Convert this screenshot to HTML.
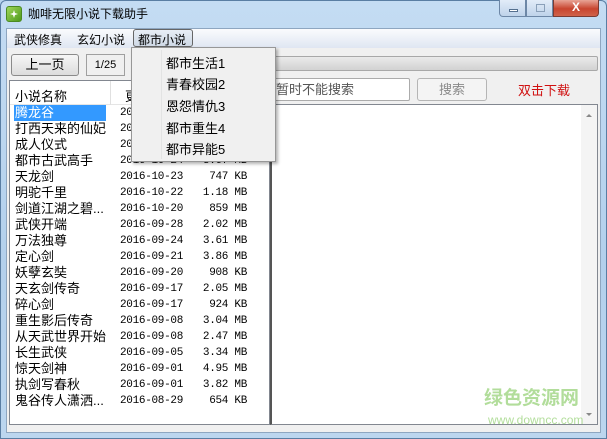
<!DOCTYPE html>
<html><head><meta charset="utf-8"><style>
*{margin:0;padding:0;box-sizing:border-box}
body{width:607px;height:439px;overflow:hidden;background:#b9d4ee;font-family:"Liberation Sans","Noto Sans CJK SC",sans-serif;font-size:12px;color:#000;position:relative}
.a{position:absolute}
.frame{left:0;top:0;width:607px;height:439px;background:linear-gradient(#c4dcf3,#b3d0ec 60%,#bcd6ef);border:1px solid #5a7ea3;border-radius:6px 6px 0 0}
.client{left:6px;top:28px;width:595px;height:405px;background:#f0f0f0;border:1px solid #8ea6c0}
.menubar{left:7px;top:29px;width:593px;height:19px;background:linear-gradient(#fafbfd,#dfe6f2)}
.btn{border:1px solid #8a8a8a;border-radius:3px;background:linear-gradient(#f6f6f6,#dcdcdc);text-align:center}
.row{position:absolute;left:0;height:16px;line-height:16px;width:259px;white-space:nowrap}
.row span{position:absolute}
.n{left:5px}
.d{left:110px;font-family:"Liberation Mono","WenQuanYi Zen Hei",monospace;font-size:11px;letter-spacing:-0.3px}
.s{right:22px;font-family:"Liberation Mono",monospace;font-size:11px;letter-spacing:-0.3px}
.mi{position:absolute;left:34px;height:20px;font-size:13px;color:#000;white-space:nowrap}
</style></head><body>
<div class="a frame"></div>
<div class="a" style="left:6px;top:6px;width:16px;height:16px;background:linear-gradient(135deg,#9fd65a,#4e9a1c);border-radius:3px;border:1px solid #4b8a22"><div style="position:absolute;left:3px;top:3px;width:8px;height:8px;background:#fff;clip-path:polygon(50% 0,62% 38%,100% 50%,62% 62%,50% 100%,38% 62%,0 50%,38% 38%)"></div></div>
<div class="a" style="left:28px;top:5px;font-size:12px">咖啡无限小说下载助手</div>
<div class="a" style="left:499px;top:0;width:27px;height:17px;border:1px solid #6d87a6;border-top:none;border-radius:0 0 0 4px;background:linear-gradient(#e2ecf8,#bfd3ea)"><div style="position:absolute;left:9px;top:9px;width:9px;height:3px;background:#fff;border:1px solid #55708f"></div></div>
<div class="a" style="left:526px;top:0;width:27px;height:17px;border:1px solid #6d87a6;border-top:none;background:linear-gradient(#e2ecf8,#bfd3ea)"><div style="position:absolute;left:9px;top:4px;width:9px;height:8px;border:1px solid #8aa0b9"></div></div>
<div class="a" style="left:553px;top:0;width:46px;height:17px;border:1px solid #7a3b33;border-top:none;border-radius:0 0 4px 0;background:linear-gradient(#e8a496,#c8452f 55%,#d0624a);color:#fff;font-weight:bold;text-align:center;line-height:15px;font-size:12px">X</div>
<div class="a client"></div>
<div class="a menubar"></div>
<div class="a" style="left:14px;top:31px;font-size:12px">武侠修真</div>
<div class="a" style="left:77px;top:31px;font-size:12px">玄幻小说</div>
<div class="a" style="left:133px;top:29px;width:60px;height:18px;border:1px solid #666;border-radius:3px;background:linear-gradient(#e8eef6,#cfd9e6)"></div>
<div class="a" style="left:138px;top:31px;font-size:12px">都市小说</div>
<div class="a btn" style="left:11px;top:54px;width:68px;height:22px;line-height:20px;font-size:13px">上一页</div>
<div class="a" style="left:86px;top:54px;width:39px;height:22px;border:1px solid #a0a0a0;background:#f0f0f0;line-height:20px;text-align:center;font-size:11px">1/25</div>
<div class="a" style="left:270px;top:56px;width:328px;height:15px;border:1px solid #a8a8a8;border-radius:2px;background:linear-gradient(#eaeaea,#d2d2d2)"></div>
<div class="a" style="left:270px;top:78px;width:140px;height:23px;border:1px solid #ababab;border-radius:2px;background:#fff;line-height:21px;padding-left:5px;color:#555;font-size:13px">暂时不能搜索</div>
<div class="a" style="left:417px;top:78px;width:70px;height:23px;border:1px solid #b5b5b5;border-radius:3px;background:#f4f4f4;line-height:21px;text-align:center;color:#8a8a8a;font-size:13px">搜索</div>
<div class="a" style="left:518px;top:80px;color:#d01010;font-size:13px">双击下载</div>
<div class="a" style="left:270px;top:104px;width:328px;height:321px;border:1px solid #828790;border-left:2px solid #555;background:#fff"></div>
<div class="a" style="left:581px;top:105px;width:16px;height:319px;background:#f4f4f4"></div>
<div class="a" style="left:586px;top:111px;width:0;height:0;border:3px solid transparent;border-bottom:3px solid #888"></div>
<div class="a" style="left:586px;top:413px;width:0;height:0;border:3px solid transparent;border-top:3px solid #888"></div>
<div class="a" style="left:9px;top:80px;width:261px;height:345px;border:1px solid #828790;background:#fff;overflow:hidden">
 <div class="a" style="left:0;top:0;width:259px;height:24px;background:#fff;border-bottom:1px solid #e5e5e5"></div>
 <div class="a" style="left:100px;top:0;width:1px;height:24px;background:#e0e0e0"></div>
 <div class="a" style="left:5px;top:5px;font-size:13px">小说名称</div>
 <div class="a" style="left:115px;top:5px;font-size:13px">更</div>
 <div class="a" style="left:0;top:24px;width:259px;height:320px;font-size:13px">
  <div class="row" style="top:0"><span class="n" style="left:4px;top:0;background:#3399ff;color:#fff;width:92px;padding-left:1px;height:16px">腾龙谷</span><span class="d">2016-10-27</span></div>
  <div class="row" style="top:16px"><span class="n">打西天来的仙妃</span><span class="d">2016-10-27</span></div>
  <div class="row" style="top:32px"><span class="n">成人仪式</span><span class="d">2016-10-27</span></div>
  <div class="row" style="top:48px"><span class="n">都市古武高手</span><span class="d">2016-10-24</span><span class="s">3.67 MB</span></div>
  <div class="row" style="top:64px"><span class="n">天龙剑</span><span class="d">2016-10-23</span><span class="s">747 KB</span></div>
  <div class="row" style="top:80px"><span class="n">明驼千里</span><span class="d">2016-10-22</span><span class="s">1.18 MB</span></div>
  <div class="row" style="top:96px"><span class="n">剑道江湖之碧...</span><span class="d">2016-10-20</span><span class="s">859 MB</span></div>
  <div class="row" style="top:112px"><span class="n">武侠开端</span><span class="d">2016-09-28</span><span class="s">2.02 MB</span></div>
  <div class="row" style="top:128px"><span class="n">万法独尊</span><span class="d">2016-09-24</span><span class="s">3.61 MB</span></div>
  <div class="row" style="top:144px"><span class="n">定心剑</span><span class="d">2016-09-21</span><span class="s">3.86 MB</span></div>
  <div class="row" style="top:160px"><span class="n">妖孽玄奘</span><span class="d">2016-09-20</span><span class="s">908 KB</span></div>
  <div class="row" style="top:176px"><span class="n">天玄剑传奇</span><span class="d">2016-09-17</span><span class="s">2.05 MB</span></div>
  <div class="row" style="top:192px"><span class="n">碎心剑</span><span class="d">2016-09-17</span><span class="s">924 KB</span></div>
  <div class="row" style="top:208px"><span class="n">重生影后传奇</span><span class="d">2016-09-08</span><span class="s">3.04 MB</span></div>
  <div class="row" style="top:224px"><span class="n">从天武世界开始</span><span class="d">2016-09-08</span><span class="s">2.47 MB</span></div>
  <div class="row" style="top:240px"><span class="n">长生武侠</span><span class="d">2016-09-05</span><span class="s">3.34 MB</span></div>
  <div class="row" style="top:256px"><span class="n">惊天剑神</span><span class="d">2016-09-01</span><span class="s">4.95 MB</span></div>
  <div class="row" style="top:272px"><span class="n">执剑写春秋</span><span class="d">2016-09-01</span><span class="s">3.82 MB</span></div>
  <div class="row" style="top:288px"><span class="n">鬼谷传人潇洒...</span><span class="d">2016-08-29</span><span class="s">654 KB</span></div>
 </div>
</div>
<div class="a" style="left:131px;top:47px;width:145px;height:115px;background:#f0f0f0;border:1px solid #979797;box-shadow:2px 2px 3px rgba(0,0,0,.3)">
 <div class="a" style="left:29px;top:2px;width:1px;height:109px;background:#e2e3e3"></div>
 <div class="mi" style="top:5px">都市生活1</div>
 <div class="mi" style="top:26px">青春校园2</div>
 <div class="mi" style="top:48px">恩怨情仇3</div>
 <div class="mi" style="top:70px">都市重生4</div>
 <div class="mi" style="top:91px">都市异能5</div>
</div>
<div class="a" style="left:484px;top:387px;font-size:19px;line-height:24px;font-weight:bold;color:#a5d88a;opacity:.85;white-space:nowrap">绿色资源网</div>
<div class="a" style="left:488px;top:413px;font-size:12px;line-height:14px;color:#a5d88a;opacity:.85;white-space:nowrap">www.downcc.com</div>
</body></html>
